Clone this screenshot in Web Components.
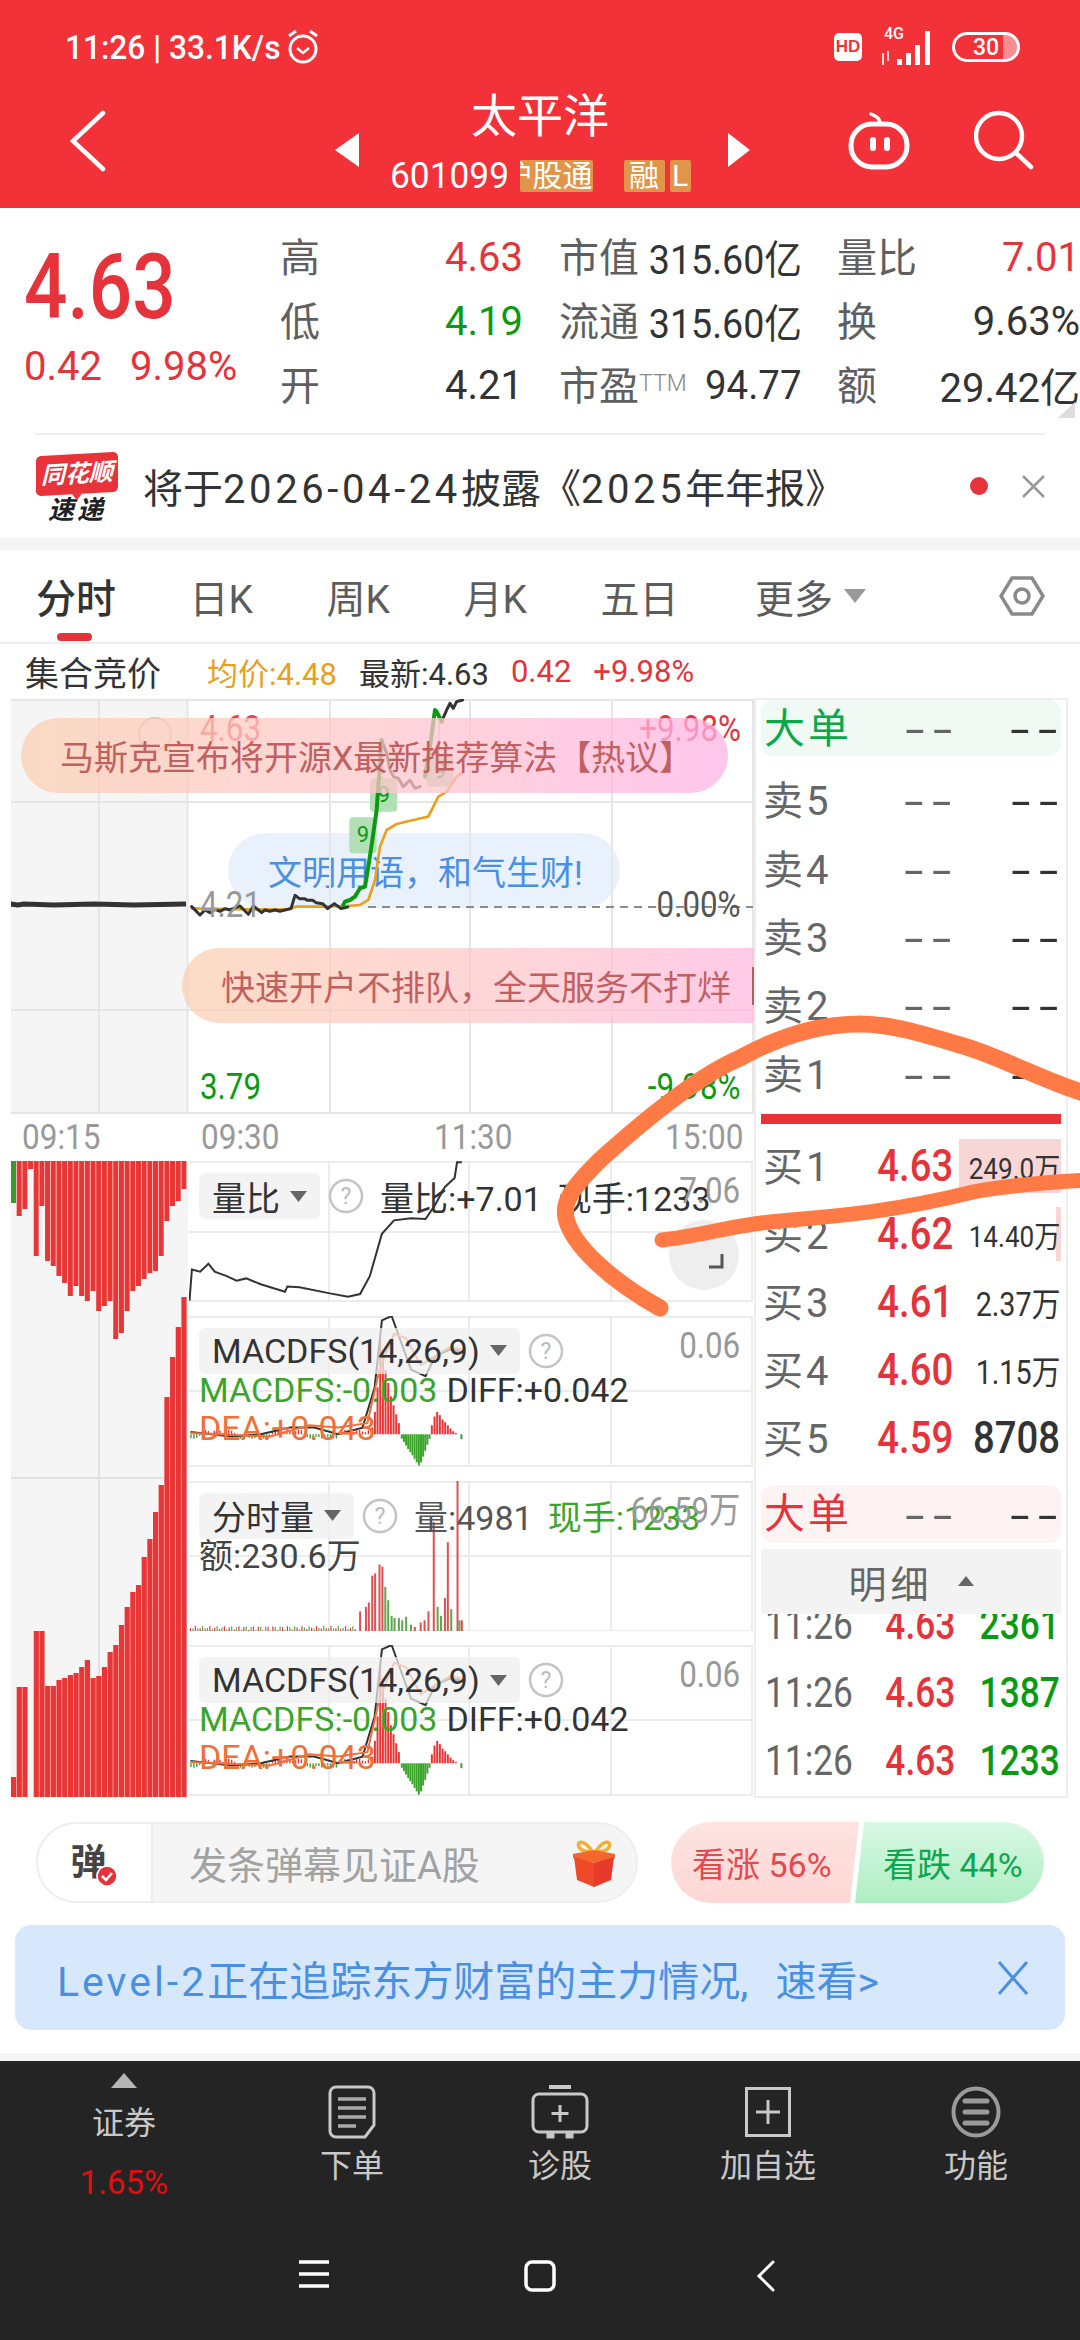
<!DOCTYPE html>
<html lang="zh">
<head>
<meta charset="utf-8">
<title>太平洋</title>
<style>
  html, body { margin: 0; padding: 0; background: #fff; }
  body { width: 1080px; height: 2340px; overflow: hidden; position: relative;
         font-family: Roboto, "Noto Sans CJK SC", sans-serif; color: #333; }
</style>
</head>
<body>
<stock-app></stock-app>

<script>
  // Small helper: every element gets an open shadow root with its own style
  function comp(tag, css, html) {
    customElements.define(tag, class extends HTMLElement {
      constructor() {
        super();
        this.attachShadow({ mode: 'open' });
      }
      connectedCallback() {
        const body = typeof html === 'function' ? html(this) : html;
        this.shadowRoot.innerHTML = `<style>${css}</style>${body}`;
      }
    });
  }

  const RED = '#e5333b', GREEN = '#0a9a12', ORANGE = '#e8a020';
  const NUM = `.n{display:inline-block;transform:scaleX(.87);transform-origin:left center}
               .nr{display:inline-block;transform:scaleX(.87);transform-origin:right center}`;

  /* ---------- header ---------- */
  comp('status-bar', `
    :host{display:flex;height:94px;align-items:center;justify-content:space-between;padding:0 60px 0 65px;color:#fff;box-sizing:border-box}
    .l,.r{display:flex;align-items:center}
    .t{font-size:33px;font-weight:500;transform:scaleX(.96);transform-origin:left center;width:222px;white-space:nowrap}
    .hd{width:28px;height:28px;border-radius:5px;background:#fff;color:${'#f23139'};font:700 17px "Liberation Sans",sans-serif;display:flex;align-items:center;justify-content:center;margin-right:18px}
    .bat{width:68px;height:30px;border:3px solid #fff;border-radius:15px;box-sizing:border-box;margin-left:16px;display:flex;align-items:center;justify-content:center;font-size:23px;font-weight:500;background:linear-gradient(90deg,transparent 78%,rgba(255,255,255,.45) 78%)}
    .g4{position:relative;width:56px;height:36px}
    .g4 span{position:absolute;left:4px;top:-4px;font-size:16px;font-weight:500;line-height:18px}
  `, `
    <div class="l"><div class="t">11:26 | 33.1K/s</div>
      <svg width="32" height="38" viewBox="0 0 32 38" fill="none" stroke="#fff" stroke-width="3"><circle cx="16" cy="21" r="13"/><path d="M10 20l6 5 6-5" stroke-width="2.4"/><path d="M2 8l7-5M30 8l-7-5"/></svg>
    </div>
    <div class="r"><div class="hd">HD</div>
      <div class="g4"><span>4G</span>
        <svg width="56" height="36" viewBox="0 0 56 36" fill="#fff" style="position:absolute;left:0;top:0"><path d="M2 24h2v12H2zM7 22h2v10H7z" opacity=".8"/><rect x="17" y="30" width="5" height="6"/><rect x="26" y="24" width="5" height="12"/><rect x="35" y="16" width="5" height="20"/><rect x="45" y="2" width="5" height="34"/></svg>
      </div>
      <div class="bat">30</div>
    </div>
  `);

  comp('stock-title', `
    :host{display:grid;grid-template-columns:1fr 420px 1fr;height:114px;color:#fff;align-items:start}
    .back{padding:16px 0 0 70px}
    .c{display:flex;justify-content:space-between;align-items:center;padding:31px 0 0 5px;box-sizing:border-box;height:80px}
    .mid{position:absolute;left:0;right:0;top:94px;display:flex;flex-direction:column;align-items:center;pointer-events:none}
    .name{font-size:46px;line-height:44px}
    .sub{display:flex;align-items:center;height:32px;margin-top:22px;width:301px}
    .code{font-size:36px;width:130px;transform:scaleX(.98);transform-origin:left center}
    .tag{background:#e0954a;height:32px;border-radius:2px;font-size:30px;line-height:32px;color:#fff;overflow:hidden;white-space:nowrap;flex:none}
    .t1{width:73px;direction:rtl}
    .t2{width:41px;margin-left:31px;text-align:center}
    .t3{width:21px;margin-left:5px;text-align:center}
    .r{display:flex;justify-content:flex-end;padding:16px 46px 0 0;gap:64px}
  `, `
    <div class="back"><svg width="36" height="62" viewBox="0 0 36 62" fill="none" stroke="#fff" stroke-width="4.5" stroke-linecap="round"><path d="M33 3L3 31l30 28"/></svg></div>
    <div class="c">
      <svg width="24" height="34" viewBox="0 0 24 34" fill="#fff"><path d="M24 0v34L0 17z"/></svg>
      <svg width="22" height="34" viewBox="0 0 22 34" fill="#fff"><path d="M0 0v34l22-17z"/></svg>
    </div>
    <div class="r">
      <svg width="62" height="60" viewBox="0 0 62 60" fill="none" stroke="#fff" stroke-width="5"><rect x="3" y="14" width="56" height="43" rx="21"/><path d="M32 14c0-6-4-8-9-10" stroke-width="3.5" stroke-linecap="round"/><rect x="22" y="27" width="6" height="14" rx="3" fill="#fff" stroke="none"/><rect x="36" y="27" width="6" height="14" rx="3" fill="#fff" stroke="none"/></svg>
      <svg width="60" height="60" viewBox="0 0 60 60" fill="none" stroke="#fff" stroke-width="4.5" stroke-linecap="round"><circle cx="25" cy="26" r="23"/><path d="M42 43l15 14"/></svg>
    </div>
    <div class="mid">
      <div class="name">太平洋</div>
      <div class="sub"><span class="code">601099</span><span class="tag t1">沪股通</span><span class="tag t2">融</span><span class="tag t3">L</span></div>
    </div>
  `);

  comp('stock-header', `:host{display:block;height:208px;background:#f23139;position:relative}`,
    `<status-bar></status-bar><stock-title></stock-title>`);

  /* ---------- quote ---------- */
  comp('quote-cell', `
    :host{display:flex;justify-content:space-between;align-items:center;height:64px;white-space:nowrap}
    .k{font-size:40px;color:#5f5f5f;margin-top:-5px}
    .k small{font-size:23px;color:#888;vertical-align:9px;font-weight:300}
    .v{font-size:40px;color:var(--c,#333);display:inline-block;transform:scaleX(var(--s,1));transform-origin:right center}
  `, el => `<span class="k">${el.getAttribute('k')}${el.hasAttribute('sup') ? `<small>${el.getAttribute('sup')}</small>` : ''}</span><span class="v">${el.getAttribute('v')}</span>`);

  comp('quote-panel', `
    :host{display:flex;height:225px;box-sizing:border-box;padding-top:17px;position:relative}
    .left{width:280px;padding-left:24px;box-sizing:border-box;color:${RED}}
    .price{font-size:90px;line-height:86px;font-weight:500;margin-top:20px;transform:scaleX(.85);transform-origin:left center}
    .chg{font-size:40px;line-height:40px;margin-top:16px;display:flex;gap:28px}
    .grid{display:grid;grid-template-columns:243px 242px 243px;column-gap:36px;align-content:start}
    .corner{position:absolute;left:1058px;top:194px;width:17px;height:16px;background:#ddd;clip-path:polygon(100% 0,100% 100%,0 100%)}
  `, `
    <div class="left"><div class="price">4.63</div><div class="chg"><span>0.42</span><span>9.98%</span></div></div>
    <div class="grid">
      <quote-cell k="高" v="4.63" style="--c:${RED}"></quote-cell>
      <quote-cell k="市值" v="315.60亿" style="--s:.94"></quote-cell>
      <quote-cell k="量比" v="7.01" style="--c:${RED}"></quote-cell>
      <quote-cell k="低" v="4.19" style="--c:${GREEN}"></quote-cell>
      <quote-cell k="流通" v="315.60亿" style="--s:.94"></quote-cell>
      <quote-cell k="换" v="9.63%"></quote-cell>
      <quote-cell k="开" v="4.21"></quote-cell>
      <quote-cell k="市盈" sup="TTM" v="94.77" style="--s:.96"></quote-cell>
      <quote-cell k="额" v="29.42亿"></quote-cell>
    </div>
    <div class="corner"></div>
  `);

  comp('alert-row', `
    :host{display:block;height:105px;padding:0 35px;box-sizing:border-box;position:relative}
    .in{display:flex;align-items:center;height:104px;border-top:2px solid #eee;box-sizing:border-box}
    .logo{width:82px;height:66px;margin:2px 25px 0 1px;display:flex;flex-direction:column;align-items:center;flex:none;font-style:italic;font-weight:700}
    .a{width:82px;height:40px;background:#e8333a;border-radius:5px;color:#fff;font-size:24px;line-height:40px;text-align:center;transform:skewY(-3deg);position:relative}
    .a:after{content:"";position:absolute;left:36px;bottom:-6px;border:5px solid transparent;border-top:6px solid #e8333a;border-bottom:0}
    .b{font-size:26px;line-height:26px;color:#222;letter-spacing:3px;margin-top:3px}
    .txt{font-size:40px;color:#333;white-space:nowrap;flex:1}
    .txt b{font-weight:400;letter-spacing:3.6px}
    .dot{width:18px;height:18px;border-radius:50%;background:${RED};margin-right:34px}
  `, `
    <div class="in">
      <div class="logo"><div class="a">同花顺</div><div class="b">速递</div></div>
      <div class="txt">将于<b>2026-04-24</b>披露《<b>2025</b>年年报》</div>
      <div class="dot"></div>
      <svg width="23" height="23" viewBox="0 0 23 23" stroke="#999" stroke-width="2.5"><path d="M1 1l21 21M22 1L1 22"/></svg>
    </div>
  `);

  /* ---------- tabs and info ---------- */
  comp('period-tabs', `
    :host{display:flex;height:94px;box-sizing:border-box;align-items:center;gap:73.500px;padding:0 35px 0 36px;border-bottom:2px solid #eee;font-size:39px;color:#5c5c5c;white-space:nowrap}
    .on{position:relative;color:#333;font-weight:500;font-size:40px}
    .on:after{content:"";position:absolute;left:21px;top:66px;width:35px;height:8px;border-radius:4px;background:${RED}}
    .m{display:flex;align-items:center;gap:11px;margin-left:3px}
    svg.hex{margin-left:auto}
  `, `
    <span class="on">分时</span><span>日K</span><span>周K</span><span>月K</span><span>五日</span>
    <span class="m">更多<svg width="22" height="14" viewBox="0 0 22 14" fill="#999"><path d="M0 0h22L11 14z"/></svg></span>
    <svg class="hex" width="46" height="42" viewBox="0 0 46 42" fill="none" stroke="#8a8a8a" stroke-width="3.5"><path d="M13 3h20l11 18-11 18H13L2 21z"/><circle cx="23" cy="21" r="7"/></svg>
  `);

  comp('info-row', `
    :host{display:flex;height:55px;align-items:center;gap:22px;padding-left:25px;font-size:31px;white-space:nowrap}
    .h{font-size:34px;margin-right:24px}
  `, `
    <span class="h">集合竞价</span><span style="color:${ORANGE}">均价:4.48</span><span>最新:4.63</span>
    <span style="color:${RED}">0.42</span><span style="color:${RED}">+9.98%</span>
  `);

  /* ---------- intraday chart ---------- */
  comp('danmu-pill', `
    :host{position:absolute;display:flex;align-items:center;height:75px;border-radius:38px;font-size:34px;white-space:nowrap;box-sizing:border-box;z-index:3}
    :host([kind=hot]){background:linear-gradient(90deg,rgba(251,208,179,.75),rgba(255,198,206,.75) 55%,rgba(255,179,230,.75));color:#c2605f}
    :host([kind=blue]){background:#e9f1fd;color:#4a90e2;z-index:0}
  `, `<slot></slot>`);

  const chartLine = 'M35 680l25 25 15-15 15 8 15-10 15 6 15-8 15 4 15-6 15-6 25 25 15-25 25 20 10-8 15 4 15-4 15 4 15-4 18-4 12-40 13 10 15 0 10 5 15 0 10 7 20 3 15 15 20-15 20 15 20-5';
  const greenA = 'M490 675l5-10 15-5 15-10 15-25 15-5 10-60 10-65 15-105 15-210';
  const darkB = 'M605 180l15 40 10 50 10 20 15 5 15 25 20-20 15 25 15-5';
  const greenB = 'M735 290l15-90 15-110 5 5 15 30';
  const darkC = 'M785 125l15-35 10-20 10 15 10-20 18-5';
  const avg = 'M35 685L200 688 320 688 350 680 420 680 500 678 540 675 565 660 585 600 600 500 620 450 650 432 700 420 745 410 760 380 775 350 800 335 830 290 848 278';

  comp('main-chart', `
    :host{display:block;position:relative;width:743px;height:415px;margin-left:11px;overflow:hidden}
    svg{position:absolute;left:0;top:0;z-index:1}
    .lb{position:absolute;font-size:36px;line-height:40px;white-space:nowrap;z-index:2}
    ${NUM}
    .bar{display:inline-block;width:2px;height:38px;background:#a86060;margin-left:21px;vertical-align:middle}
  `, `
    <danmu-pill kind="blue" style="left:217px;top:134px;width:392px;padding-left:40px">文明用语，和气生财!</danmu-pill>
    <svg width="743" height="415" viewBox="11 699 743 415" fill="none">
      <rect x="11" y="699" width="176" height="415" fill="#f5f5f5"/>
      <path d="M11 700H754M11 802H754M11 1010H754M11 1113H754M99 699V1114M187.5 699V1114M330 699V1114M470 699V1114M612 699V1114M753 699V1114" stroke="#e6e6e6" stroke-width="2"/>
      <path d="M368 907H753" stroke="#8a8a8a" stroke-width="2" stroke-dasharray="8 6"/>
      <circle cx="155" cy="734" r="16" stroke="#c8c8c8" stroke-width="2"/>
      <path d="M10 904l8 1 6-1 30 1 40-1 40 1 52-1" stroke="#333" stroke-width="5"/>
      <g transform="translate(180 680) scale(.3333)" stroke-linejoin="round" stroke-linecap="round">
        <rect x="508" y="412" width="82" height="108" rx="12" fill="#b2e0b4"/>
        <rect x="570" y="295" width="82" height="100" rx="12" fill="#b2e0b4"/>
        <rect x="740" y="220" width="80" height="100" rx="12" fill="#b2e0b4"/>
        <path d="${avg}" stroke="${ORANGE}" stroke-width="8"/>
        <path d="${chartLine}" stroke="#333" stroke-width="9"/>
        <path d="${darkB}" stroke="#333" stroke-width="9"/>
        <path d="${darkC}" stroke="#333" stroke-width="9"/>
        <path d="${greenA}" stroke="${GREEN}" stroke-width="12"/>
        <path d="${greenB}" stroke="${GREEN}" stroke-width="12"/>
        <path d="M608 190V300M778 130V225" stroke="#777" stroke-width="2" stroke-dasharray="6 5"/>
        <text x="530" y="487" font-size="66" fill="${GREEN}" font-family="Roboto">9</text>
        <text x="593" y="366" font-size="66" fill="${GREEN}" font-family="Roboto">9</text>
        <text x="762" y="293" font-size="66" fill="${GREEN}" font-family="Roboto">9</text>
      </g>
    </svg>
    <span class="lb n" style="left:189px;top:10px;color:#ee4448">4.63</span>
    <span class="lb" style="right:13px;top:10px;color:${RED}"><span class="nr">+9.98%</span></span>
    <span class="lb n" style="left:189px;top:186px;color:#999">4.21</span>
    <span class="lb" style="right:13px;top:186px;color:#555"><span class="nr">0.00%</span></span>
    <span class="lb n" style="left:189px;top:368px;color:${GREEN}">3.79</span>
    <span class="lb" style="right:13px;top:368px;color:${GREEN}"><span class="nr">-9.98%</span></span>
    <danmu-pill kind="hot" style="left:10px;top:19px;width:707px;padding-left:39px">马斯克宣布将开源X最新推荐算法【热议】</danmu-pill>
    <danmu-pill kind="hot" style="left:171px;top:249px;width:660px;padding-left:39px">快速开户不排队，全天服务不打烊<span class="bar"></span></danmu-pill>
  `);

  comp('time-axis', `
    :host{display:grid;height:47px;grid-template-columns:179px 233px 231px 1fr;margin-left:11px;font-size:35px;line-height:47px;color:#999}
    span{display:inline-block;transform:scaleX(.9);transform-origin:left center}
    div{padding-left:11px}
    div:first-child{padding-left:13px}
  `, `<div><span>09:15</span></div><div><span>09:30</span></div><div><span>11:30</span></div><div><span>15:00</span></div>`);

  /* ---------- auction column ---------- */
  comp('auction-bars', `:host{display:block;width:177px;height:636px;flex:none}svg{display:block}`, () => {
    const top = [42,55,48,8,95,45,100,105,115,122,135,125,135,140,130,150,145,140,178,172,150,130,125,118,112,110,95,60,45,40,28];
    const bot = [20,110,110,0,166,166,111,111,117,119,122,124,130,137,119,121,130,145,152,172,190,205,212,240,258,285,312,400,440,470,500];
    let r = '';
    top.forEach((h, i) => { r += `<rect x="${11 + i * 5.68}" y="1161" width="5" height="${h}" fill="${i ? '#e83535' : '#3a9a2a'}"/>`; });
    bot.forEach((h, i) => { r += `<rect x="${11 + i * 5.68}" y="${1797 - h}" width="5.2" height="${h}" fill="#e83535"/>`; });
    return `<svg width="177" height="636" viewBox="11 1161 177 636">
      <rect x="11" y="1161" width="177" height="636" fill="#f5f5f5"/>
      <path d="M99 1161V1797M11 1478H188" stroke="#e2e2e2" stroke-width="2" fill="none"/>${r}</svg>`;
  });

  /* ---------- sub panels ---------- */
  const PANEL = `
    :host{display:block;position:relative;width:564px;overflow:hidden}
    svg{position:absolute;left:0;top:0}
    .labels{position:absolute;left:0;top:0;right:0;padding:12px 10px;display:flex;flex-direction:column;font-size:34px;white-space:nowrap}
    .row{display:flex;align-items:center;height:var(--rh,46px)}
    .tag{display:inline-flex;align-items:center;height:46px;background:rgba(238,238,238,.72);border-radius:6px;padding:0 13px 0 13px;color:#333}
    .tag svg{position:static;margin-left:10px}
    .q{position:static;margin:0 16px 0 8px}
    .rv{position:absolute;right:13px;top:10px;color:#999;font-size:36px;line-height:40px}
    ${NUM}
  `;
  const tri = `<svg width="17" height="11" viewBox="0 0 17 11" fill="#666"><path d="M0 0h17L8.5 11z"/></svg>`;
  const qmark = `<svg class="q" width="36" height="36" viewBox="0 0 36 36" fill="none"><circle cx="18" cy="18" r="16" stroke="#c4c4c4" stroke-width="2.5"/><text x="18" y="26" font-size="23" fill="#bbb" text-anchor="middle" font-family="Roboto">?</text></svg>`;
  const grid = (h, mid) => `<path d="M0 1H564M0 ${h - 1}H564M0 ${mid}H564M140 0V${h}M280 0V${h}M422 0V${h}M563 0V${h}" stroke="#ececec" stroke-width="2" fill="none"/>`;
  // group that takes coordinates of the zoomed crop, so the traces keep their shape
  const trace = (zTop, inner) => `<g transform="translate(-190 0) scale(.4847 .4464) translate(0 ${-zTop})">${inner}</g>`;
  const ns = 'vector-effect="non-scaling-stroke"';

  comp('ratio-panel', `${PANEL}:host{height:141px}`, `
    <svg width="564" height="141" viewBox="0 0 564 141" fill="none">
      ${grid(141, 71)}
      <circle cx="515" cy="94" r="35" fill="#eee"/>
      <path d="M520 106h13V93M497 82V75h7" stroke="#555" stroke-width="3"/>
      ${trace(92, `<path d="M393 405l5-70 17 5 17-18 13 18 25 10 20 10 20-5 30 13 50 17 5-12 25 2 60 13 40 8 25-6 20-40 25-95 25-30 35-5 30 2 20-32 20-40 20-20 5-35h10" stroke="#333" stroke-width="2" ${ns}/>`)}
    </svg>
    <div class="labels"><div class="row">
      <span class="tag">量比${tri}</span>${qmark}
      <span>量比:+7.01</span><span style="margin-left:16px">现手:1233</span>
    </div></div>
    <span class="rv"><span class="nr">7.06</span></span>
  `);

  const macdBars = () => {
    let s = '';
    // small bars ahead of the rise
    for (let x = 396; x < 768; x += 6) {
      const h = 3 + Math.abs(Math.sin(x * 1.7)) * 7;
      const up = Math.sin(x * .045) > 0;
      s += `<path d="M${x} 705V${up ? 705 - h : 705 + h}" stroke="${up ? '#e83535' : '#3aa52a'}" stroke-width="1.4" ${ns}/>`;
    }
    [690,655,600,490,515,560,590,620,640,660,680].forEach((t, i) => {
      s += `<path d="M${770 + i * 5.5} 705V${t}" stroke="#e83535" stroke-width="2" ${ns}/>`;
    });
    [715,722,730,738,745,752,760,768,775,768,755,742,728,715].forEach((b, i) => {
      s += `<path d="M${831 + i * 4.4} 705V${b}" stroke="#3aa52a" stroke-width="2" ${ns}/>`;
    });
    [685,665,655,662,672,678,685,692,698,702].forEach((t, i) => {
      s += `<path d="M${893 + i * 5.5} 705V${t}" stroke="#e83535" stroke-width="2" ${ns}/>`;
    });
    s += `<path d="M954 705V716" stroke="#3aa52a" stroke-width="2" ${ns}/>`;
    return s;
  };

  comp('macd-panel', `${PANEL}:host{height:151px}
    .g{color:#3aa52a}.o{color:#f0703a}.labels{--rh:40px}.row:first-child{height:46px}
    .row.one{margin-top:-4px;height:40px}.row.two{margin-top:0;height:36px}
  `, `
    <svg width="564" height="151" viewBox="0 0 564 151" fill="none">
      ${grid(151, 75)}
      ${trace(440, `${macdBars()}
        <path d="M395 700l85 10 60-5 60-15 50 0 50 15 50-15 25-90 15-150 20-10 20 60 20 60 30 15 20-45 30-15 25 5" stroke="#333" stroke-width="2" ${ns}/>
        <path d="M395 702l165 8 80-25 60 5 60-10 25-120 30-80 25 10 30 60 30-20 30-20 25 5" stroke="#f0703a" stroke-width="2" ${ns}/>`)}
    </svg>
    <div class="labels">
      <div class="row"><span class="tag">MACDFS(14,26,9)${tri}</span>${qmark}</div>
      <div class="row one"><span class="g">MACDFS:-0.003</span><span style="margin-left:9px">DIFF:+0.042</span></div>
      <div class="row two"><span class="o">DEA:+0.043</span></div>
    </div>
    <span class="rv"><span class="nr">0.06</span></span>
  `);

  comp('volume-panel', `${PANEL}:host{height:151px}`, () => {
    let s = '';
    for (let x = 395; x < 740; x += 5) {
      const h = 4 + Math.abs(Math.sin(x * 2.3)) * 10;
      s += `<path d="M${x} 1147V${1147 - h}" stroke="${Math.round(x / 5) % 2 ? '#e83535' : '#5aa84a'}" stroke-width="1.2" ${ns}/>`;
    }
    [[745,1100,0],[757,1090,0],[763,1080,0],[770,1020,0],[776,1015,0],[785,995,0],[791,1000,0],[797,1045,1],[803,1075,1],[810,1110,1],[816,1115,1],[825,1115,1],[832,1120,1],[840,1112,1],[850,1130,1],[858,1135,0],[870,1125,0],[878,1120,0],[886,1100,0],[897,900,0],[905,1090,1],[912,1110,1],[920,1070,0],[926,945,0],[933,1095,1],[946,805,0],[950,1120,1],[955,1120,0]]
      .forEach(([x, t, g]) => { s += `<path d="M${x} 1147V${t}" stroke="${g ? '#5aa84a' : '#e05050'}" stroke-width="2" ${ns}/>`; });
    return `
    <svg width="564" height="151" viewBox="0 0 564 151" fill="none">
      ${grid(151, 75)}
      ${trace(808, s)}
    </svg>
    <div class="labels">
      <div class="row"><span class="tag">分时量${tri}</span>${qmark}
        <span style="color:#555">量:4981</span><span style="margin-left:15px;color:#3aa52a">现手:1233</span></div>
      <div class="row" style="height:40px;margin-top:-5px;color:#444">额:230.6万</div>
    </div>
    <span class="rv"><span class="nr">66.59万</span></span>`;
  });

  comp('sub-panels', `
    :host{display:flex;flex-direction:column;flex:1;gap:14px;margin-left:1px}
    macd-panel:last-child{height:152px}
  `, `
    <ratio-panel></ratio-panel><macd-panel></macd-panel><volume-panel></volume-panel><macd-panel></macd-panel>
  `);

  comp('chart-column', `
    :host{display:block;width:754px;flex:none}
    .low{display:flex;margin-left:11px;height:636px}
  `, `
    <main-chart></main-chart><time-axis></time-axis>
    <div class="low"><auction-bars></auction-bars><sub-panels></sub-panels></div>
  `);

  /* ---------- order book ---------- */
  comp('dash-mark', `
    :host{display:inline-block;white-space:nowrap;font:400 40px/40px "Liberation Sans",sans-serif;color:var(--d,#666);letter-spacing:3px;margin-right:-5px;transform:scaleX(1.7);transform-origin:right center}
  `, `--`);

  comp('big-order', `
    :host{display:grid;grid-template-columns:88px 102px 105px;align-items:center;height:var(--bh,56px);margin:0 5px;padding-left:3px;border-radius:12px;background:var(--bg);text-align:right}
    .k{font-size:41px;letter-spacing:3px;color:var(--fg);text-align:left;margin-top:-7px;white-space:nowrap}
  `, `<span class="k"><slot></slot></span><dash-mark></dash-mark><dash-mark style="--d:#333"></dash-mark>`);

  comp('book-row', `
    :host{display:grid;position:relative;grid-template-columns:92px 98px 107px;padding-left:7px;height:68px;align-items:center;text-align:right;white-space:nowrap}
    .k{font-size:40px;color:#666;text-align:left;position:relative;top:-2px}
    .k i{font-style:normal;font-size:40px;margin-left:3px}
    .p{font-size:44px;font-weight:500;color:${RED};position:relative}
    .v{color:#333;position:relative;font-size:var(--vf,30px);font-weight:var(--vw,400)}
    .bar{position:absolute;right:5px;top:7px;height:54px;background:#f8d6d6}
    ${NUM}
    dash-mark{position:relative}
  `, el => {
    const price = el.getAttribute('p'), vol = el.getAttribute('v'), bar = el.getAttribute('bar');
    return `${bar ? `<div class="bar" style="width:${bar}px"></div>` : ''}
      <span class="k">${el.getAttribute('k')}<i>${el.getAttribute('i')}</i></span>
      ${price ? `<span class="p"><span class="nr">${price}</span></span><span class="v"><span class="nr">${vol}</span></span>`
              : `<dash-mark></dash-mark><dash-mark style="--d:#333"></dash-mark>`}`;
  });

  comp('tick-row', `
    :host{display:grid;grid-template-columns:90px 100px 105px;padding-left:9px;height:68px;align-items:center;font-size:43px;white-space:nowrap;text-align:right}
    .t{color:#666;text-align:left;transform:scaleX(.82);transform-origin:left center;display:inline-block}
    .p{color:${RED};font-weight:500}
    .v{color:${GREEN};font-weight:500}
    .nr{display:inline-block;transform:scaleX(.82);transform-origin:right center}
  `, el => `<span class="t">11:26</span><span class="p"><span class="nr">4.63</span></span><span class="v"><span class="nr">${el.getAttribute('v')}</span></span>`);

  comp('order-book', `
    :host{display:block;width:314px;height:1100px;box-sizing:border-box;border:solid #eee;border-width:2px 2px 2px 2px;margin-top:-1px;overflow:hidden}
    .sells{margin-top:10px}
    .sells book-row{height:68.4px}
    .line{height:10px;background:${'#e83238'};margin:6px 5px 8px}
    big-order.r{margin-top:13px}
    .ming{display:flex;justify-content:center;align-items:center;height:65px;margin:6px 5px 0;background:#f3f3f3;color:#666;font-size:38px;letter-spacing:4px;position:relative;z-index:2;gap:25px}
    .ticks{margin-top:-24px;height:210px}
  `, `
    <big-order class="g" style="--bg:#f0f9f4;--fg:#0ba84a">大单</big-order>
    <div class="sells">
      <book-row k="卖" i="5"></book-row><book-row k="卖" i="4"></book-row><book-row k="卖" i="3"></book-row><book-row k="卖" i="2"></book-row><book-row k="卖" i="1"></book-row>
    </div>
    <div class="line"></div>
    <book-row k="买" i="1" p="4.63" v="249.0万" bar="102"></book-row>
    <book-row k="买" i="2" p="4.62" v="14.40万" bar="5"></book-row>
    <book-row k="买" i="3" p="4.61" v="2.37万" style="--vf:33px"></book-row>
    <book-row k="买" i="4" p="4.60" v="1.15万" style="--vf:33px"></book-row>
    <book-row k="买" i="5" p="4.59" v="8708" style="--vf:44px;--vw:500"></book-row>
    <big-order class="r" style="--bg:#fdf3f3;--fg:${RED};--bh:58px">大单</big-order>
    <div class="ming"><span>明细</span><svg width="16" height="10" viewBox="0 0 16 10" fill="#666"><path d="M8 0l8 10H0z"/></svg></div>
    <div class="ticks"><tick-row v="2361"></tick-row><tick-row v="1387"></tick-row><tick-row v="1233"></tick-row></div>
  `);

  comp('market-body', `:host{display:flex;height:1099px}`, `<chart-column></chart-column><order-book></order-book>`);

  /* ---------- bottom of page ---------- */
  comp('danmu-input', `
    :host{display:flex;width:602px;height:81px;box-sizing:border-box;border:2px solid #eee;border-radius:41px;overflow:hidden;background:#f5f5f5;align-items:center}
    .ic{width:115px;height:100%;background:#fff;flex:none;display:flex;align-items:center;justify-content:center;position:relative;border-right:2px solid #eee;box-sizing:border-box}
    .ic b{font-size:36px;color:#444;margin:-8px 12px 0 0;font-weight:700}
    .ic svg{position:absolute;left:58px;top:41px}
    .tx{font-size:38px;color:#a2a2a2;margin-left:36px;flex:1;white-space:nowrap}
    .gift{margin-right:20px}
  `, `
    <div class="ic"><b>弹</b><svg width="22" height="22" viewBox="0 0 22 22"><circle cx="11" cy="11" r="10" fill="#e5333b" stroke="#fff" stroke-width="1.5"/><path d="M6 11l4 4 6-7" stroke="#fff" stroke-width="2.5" fill="none"/></svg></div>
    <div class="tx">发条弹幕见证A股</div>
    <svg class="gift" width="44" height="48" viewBox="0 0 44 48">
      <path d="M20 12C12 0 4 2 7 8c2 4 8 5 13 4zM24 12C32 0 40 2 37 8c-2 4-8 5-13 4z" fill="none" stroke="#f0b030" stroke-width="3.5"/>
      <path d="M1 15l21-4 21 4v4L22 24 1 19z" fill="#f2672e"/>
      <path d="M2 18l20 6v24L5 41z" fill="#ee4a2a"/><path d="M42 18l-20 6v24l17-7z" fill="#e83a2a"/>
    </svg>
  `);

  comp('vote-pill', `
    :host{display:flex;width:373px;height:81px;border-radius:41px;overflow:hidden;font-size:34px;white-space:nowrap}
    div{height:100%;display:flex;align-items:center;flex:none}
    .u{width:188px;padding-left:21px;box-sizing:border-box;background:linear-gradient(#fde3e0,#ffd7d5);color:#e5484d;clip-path:polygon(0 0,100% 0,calc(100% - 9px) 100%,0 100%)}
    .d{width:189px;margin-left:-4px;padding-left:28px;box-sizing:border-box;background:linear-gradient(#d9f8e4,#aeeec3);color:#0aa850;clip-path:polygon(9px 0,100% 0,100% 100%,0 100%)}
  `, `<div class="u">看涨 56%</div><div class="d">看跌 44%</div>`);

  comp('action-row', `:host{display:flex;justify-content:space-between;padding:24px 36px 0;height:105px;box-sizing:border-box}`,
    `<danmu-input></danmu-input><vote-pill></vote-pill>`);

  comp('level-banner', `
    :host{display:flex;align-items:center;justify-content:space-between;margin:22px 15px 0;height:105px;padding:0 37px 0 42px;background:#d8e8fc;border-radius:16px;color:#4a90e2;font-size:41px;white-space:nowrap}
    b{font-weight:400;letter-spacing:3px}
    i{font-style:normal;margin-right:17px}
  `, `<span><b>Level-2</b>正在追踪东方财富的主力情况<i>,</i> 速看&gt;</span>
      <svg width="30" height="34" viewBox="0 0 30 34" stroke="#4a90e2" stroke-width="3" fill="none"><path d="M1 1l28 32M29 1L1 33"/></svg>`);

  comp('footer-tab', `
    :host{display:flex;flex-direction:column;align-items:center;color:#c8c8c8;font-size:32px;padding-top:24px}
    .ico{height:54px;display:flex;align-items:center}
    .lb{margin-top:4px;line-height:46px}
  `, el => `<div class="ico"><slot></slot></div><div class="lb">${el.getAttribute('label')}</div>`);

  comp('dark-footer', `
    :host{display:block;height:279px;background:#242424;position:relative;border-top:0}
    .tabs{display:grid;grid-template-columns:248px repeat(4,208px);height:170px}
    .sec{display:flex;flex-direction:column;align-items:center;color:#c8c8c8;font-size:32px;padding-top:12px}
    .sec .p{color:#e00f0f;margin-top:14px;line-height:46px;font-size:33px}
    .sec .s{margin-top:12px;line-height:46px}
    .nav{display:grid;grid-template-columns:repeat(3,226px);justify-content:center;justify-items:center;margin-top:29px}
  `, `
    <div class="tabs">
      <div class="sec"><svg width="26" height="15" viewBox="0 0 26 15" fill="#b5b5b5"><path d="M13 0l13 15H0z"/></svg><div class="s">证券</div><div class="p">1.65%</div></div>
      <footer-tab label="下单"><svg width="48" height="54" viewBox="0 0 48 54" fill="none" stroke="#c8c8c8" stroke-width="3"><path d="M8 2h32a6 6 0 0 1 6 6v32l-9 12H8a6 6 0 0 1-6-6V8a6 6 0 0 1 6-6z"/><path d="M10 14h28M10 23h28M10 32h28M10 41h18" stroke="#aaa" stroke-width="3.5"/></svg></footer-tab>
      <footer-tab label="诊股"><svg width="58" height="54" viewBox="0 0 58 54" fill="none" stroke="#c8c8c8" stroke-width="3"><path d="M18 2h22" stroke-width="4"/><rect x="2" y="9" width="54" height="38" rx="6"/><path d="M17 47v5h5v-5M36 47v5h5v-5" fill="#c8c8c8"/><path d="M29 20v17M20.5 28.500h17"/></svg></footer-tab>
      <footer-tab label="加自选"><svg width="46" height="50" viewBox="0 0 46 50" fill="none" stroke="#c8c8c8" stroke-width="3"><rect x="1.500" y="1.500" width="43" height="47"/><path d="M23 13v24M11 25h24"/></svg></footer-tab>
      <footer-tab label="功能"><svg width="50" height="52" viewBox="0 0 50 52" fill="none"><ellipse cx="25" cy="26" rx="22.500" ry="23.500" stroke="#9a9a9a" stroke-width="4"/><path d="M14 15h22M14 26h22M14 37h22" stroke="#9a9a9a" stroke-width="5" stroke-linecap="round"/></svg></footer-tab>
    </div>
    <div class="nav">
      <svg width="30" height="28" viewBox="0 0 30 28" stroke="#fff" stroke-width="3.500"><path d="M0 2h30M0 14h30M0 26h30"/></svg>
      <svg width="32" height="32" viewBox="0 0 32 32" fill="none" stroke="#fff" stroke-width="3.500"><rect x="2" y="2" width="28" height="28" rx="6"/></svg>
      <svg width="20" height="32" viewBox="0 0 20 32" fill="none" stroke="#fff" stroke-width="3" stroke-linecap="round"><path d="M17 2L3 16l14 14"/></svg>
    </div>
  `);

  // Hand-drawn orange marks lying over the whole page
  comp('ink-scribble', `:host{position:absolute;left:0;top:0;width:1080px;height:2340px;z-index:9;pointer-events:none}`, `
    <svg width="1080" height="2340" viewBox="0 0 1080 2340" fill="none" stroke="#ff7a45" stroke-linecap="round" stroke-linejoin="round">
      <path stroke-width="17" d="M1090 1095C1040 1080 1000 1056 960 1045C920 1033 890 1024 860 1024C820 1024 780 1036 740 1058C700 1075 650 1115 600 1160C575 1185 562 1200 566 1218C572 1245 610 1280 660 1308"/>
      <path stroke-width="15" d="M662 1240C700 1236 730 1226 770 1222C820 1217 880 1215 973 1192C1010 1185 1050 1182 1090 1180"/>
    </svg>
  `);

  comp('stock-app', `
    :host{display:block;width:1080px;height:2340px;position:relative}
    .band{height:12px;background:#f4f4f4}
    .band2{height:8px;background:#f4f4f4;margin-top:23px}
  `, `
    <stock-header></stock-header>
    <quote-panel></quote-panel>
    <alert-row></alert-row>
    <div class="band"></div>
    <period-tabs></period-tabs>
    <info-row></info-row>
    <market-body></market-body>
    <action-row></action-row>
    <level-banner></level-banner>
    <div class="band2"></div>
    <dark-footer></dark-footer>
    <ink-scribble></ink-scribble>
  `);
</script>
</body>
</html>
